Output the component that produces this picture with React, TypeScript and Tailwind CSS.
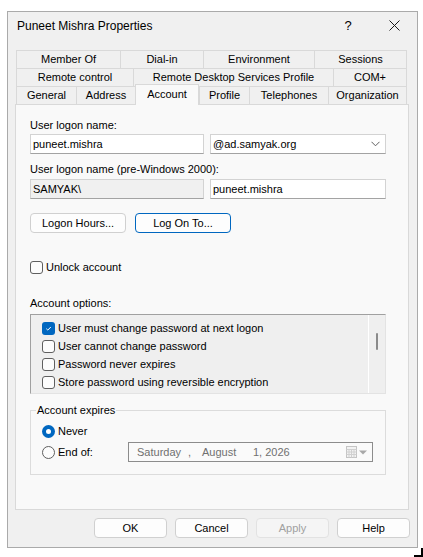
import React from "react";

type Tab = { label: string; width: string; active?: boolean };

const tabRows: Tab[][] = [
  [
    { label: "Member Of", width: "w-[104px]" },
    { label: "Dial-in", width: "w-[83px]" },
    { label: "Environment", width: "w-[111px]" },
    { label: "Sessions", width: "w-[93px]" },
  ],
  [
    { label: "Remote control", width: "w-[117px]" },
    { label: "Remote Desktop Services Profile", width: "w-[200px]" },
    { label: "COM+", width: "w-[74px]" },
  ],
  [
    { label: "General", width: "w-[60px]" },
    { label: "Address", width: "w-[59px]" },
    { label: "Account", width: "w-[64px]", active: true },
    { label: "Profile", width: "w-[50px]" },
    { label: "Telephones", width: "w-[79px]" },
    { label: "Organization", width: "w-[79px]" },
  ],
];

const accountOptions = [
  { label: "User must change password at next logon", checked: true },
  { label: "User cannot change password", checked: false },
  { label: "Password never expires", checked: false },
  { label: "Store password using reversible encryption", checked: false },
];

const CheckBox = ({ checked = false }: { checked?: boolean }) =>
  checked ? (
    <span className="flex h-[13px] w-[13px] shrink-0 items-center justify-center rounded-[3px] bg-[#0067c0]">
      <svg width="9" height="9" viewBox="0 0 9 9">
        <path d="M2.3 4.7 3.8 6.1 6.8 3" fill="none" stroke="#fff" strokeWidth="1" />
      </svg>
    </span>
  ) : (
    <span className="h-[13px] w-[13px] shrink-0 rounded-[3px] border border-[#5f5f5f] bg-[#fcfcfc]" />
  );

const Radio = ({ checked = false }: { checked?: boolean }) =>
  checked ? (
    <span className="flex h-[13px] w-[13px] shrink-0 items-center justify-center rounded-full bg-[#0067c0]">
      <span className="h-[5px] w-[5px] rounded-full bg-white" />
    </span>
  ) : (
    <span className="h-[13px] w-[13px] shrink-0 rounded-full border border-[#5f5f5f] bg-[#fcfcfc]" />
  );

const Button = ({
  label,
  width,
  focused = false,
  disabled = false,
}: {
  label: string;
  width: string;
  focused?: boolean;
  disabled?: boolean;
}) => (
  <div
    className={`flex h-[20px] items-center justify-center rounded-[4px] border ${width} ${
      focused
        ? "border-[#0067c0] bg-[#fdfdfd] text-black"
        : disabled
          ? "border-[#e2e2e2] bg-[#f5f5f5] text-[#a0a0a0]"
          : "border-[#d0d0d0] bg-[#fdfdfd] text-black"
    }`}
  >
    {label}
  </div>
);

const TextField = ({
  value,
  width,
  readOnly = false,
  children,
}: {
  value: string;
  width: string;
  readOnly?: boolean;
  children?: React.ReactNode;
}) => (
  <div
    className={`flex h-[20px] items-center border border-[#d3d3d3] border-b-[#a3a3a3] pl-[2px] pr-[4px] ${width} ${
      readOnly ? "bg-[#f0f0f0]" : "bg-white"
    }`}
  >
    <span className="flex-1">{value}</span>
    {children}
  </div>
);

const TabStrip = () => (
  <div className="ml-[8px] flex flex-col">
    {tabRows.map((row, r) => (
      <div key={r} className="flex h-[18px] items-start">
        {row.map((tab, i) =>
          tab.active ? (
            <div
              key={tab.label}
              className={`relative z-10 -mt-[2px] flex h-[21px] items-center justify-center border-x border-t border-[#d9d9d9] bg-[#f9f9f9] pb-[1px] ${tab.width}`}
            >
              {tab.label}
            </div>
          ) : (
            <div
              key={tab.label}
              className={`flex h-[18px] items-center justify-center border-l border-t border-[#d9d9d9] ${
                i === row.length - 1 ? "border-r" : ""
              } ${tab.width}`}
            >
              {tab.label}
            </div>
          ),
        )}
      </div>
    ))}
  </div>
);

const AccountPanel = () => (
  <div className="ml-[7px] h-[406px] w-[394px] border border-[#d9d9d9] bg-[#f9f9f9] pl-[14px] pt-[13px]">
    <div className="flex w-[356px] flex-col">
      <div className="h-[15px] leading-[15px]">User logon name:</div>
      <div className="mt-[1px] flex gap-[6px]">
        <TextField value="puneet.mishra" width="w-[174px]" />
        <TextField value="@ad.samyak.org" width="w-[176px]">
          <svg width="9" height="6" viewBox="0 0 9 6" className="mr-[1px]">
            <path d="M0.5 0.8 4.5 4.8 8.5 0.8" fill="none" stroke="#606060" strokeWidth="1" />
          </svg>
        </TextField>
      </div>

      <div className="mt-[8px] h-[15px] leading-[15px]">User logon name (pre-Windows 2000):</div>
      <div className="mt-[2px] flex gap-[6px]">
        <TextField value="SAMYAK\" width="w-[174px]" readOnly />
        <TextField value="puneet.mishra" width="w-[176px]" />
      </div>

      <div className="mt-[14px] flex gap-[9px]">
        <Button label="Logon Hours..." width="w-[96px]" />
        <Button label="Log On To..." width="w-[96px]" focused />
      </div>

      <div className="mt-[27px] flex h-[15px] items-center gap-[3px]">
        <CheckBox />
        <span>Unlock account</span>
      </div>

      <div className="mt-[21px] h-[15px] leading-[15px]">Account options:</div>
      <div className="mt-[3px] flex h-[80px] border border-[#a0a0a0] border-b-[#e3e3e3] border-r-[#e3e3e3] bg-[#efefef]">
        <div className="flex flex-1 flex-col pl-[11px] pt-[4px]">
          {accountOptions.map((opt) => (
            <div key={opt.label} className="flex h-[18px] items-center gap-[3px]">
              <CheckBox checked={opt.checked} />
              <span>{opt.label}</span>
            </div>
          ))}
        </div>
        <div className="flex w-[17px] justify-center border-l border-white pt-[18px]">
          <div className="h-[17px] w-[2px] rounded-full bg-[#8a8a8a]" />
        </div>
      </div>

      <div className="relative mt-[16px] h-[65px] border border-[#dcdcdc] pl-[11px] pt-[13px]">
        <span className="absolute -top-[8px] left-[5px] bg-[#f9f9f9] px-[1px] leading-[15px]">
          Account expires
        </span>
        <div className="flex h-[15px] items-center gap-[3px]">
          <Radio checked />
          <span>Never</span>
        </div>
        <div className="mt-[3px] flex h-[20px] items-center">
          <Radio />
          <span className="ml-[3px] w-[70px]">End of:</span>
          <div className="flex h-[20px] w-[245px] items-center border border-[#8c8c8c] bg-[#fafafa] pl-[8px] pr-[5px] text-[#707070]">
            <span className="w-[51px]">Saturday</span>
            <span className="w-[14px]">,</span>
            <span className="w-[51px]">August</span>
            <span>1, 2026</span>
            <svg width="11" height="12" viewBox="0 0 11 12" className="ml-auto">
              <rect x="0.5" y="0.5" width="10" height="11" fill="#f2f2f2" stroke="#c4c4c4" />
              <path d="M0.5 3.5h10M0.5 6h10M0.5 8.5h10M3 3.5v8M5.5 3.5v8M8 3.5v8" stroke="#d0d0d0" strokeWidth="1" />
            </svg>
            <svg width="8" height="5" viewBox="0 0 8 5" className="ml-[2px]">
              <path d="M0 0.5h8L4 4.5z" fill="#a8a8a8" />
            </svg>
          </div>
        </div>
      </div>
    </div>
  </div>
);

export default function App() {
  return (
    <div className="relative h-[557px] w-[423px] bg-white pl-[7px] pt-[11px] font-['Liberation_Sans',Arial,sans-serif] text-[11px] text-black">
      <div className="flex h-[537px] w-[411px] flex-col border border-[#aaaaaa] bg-[#f0f0f0]">
        <div className="flex h-[27px] items-center pl-[9px]">
          <span className="text-[12px]">Puneet Mishra Properties</span>
          <span className="ml-auto flex h-[27px] w-[46px] items-center justify-center text-[13px]">?</span>
          <span className="flex h-[27px] w-[46px] items-center justify-center">
            <svg width="11" height="11" viewBox="0 0 11 11">
              <path d="M0.5 0.5 10.5 10.5M10.5 0.5 0.5 10.5" stroke="#1a1a1a" strokeWidth="1" />
            </svg>
          </span>
        </div>

        <div className="mt-[11px]">
          <TabStrip />
          <AccountPanel />
        </div>

        <div className="mt-[8px] flex justify-end gap-[8px] pr-[7px]">
          <Button label="OK" width="w-[73px]" />
          <Button label="Cancel" width="w-[73px]" />
          <Button label="Apply" width="w-[73px]" disabled />
          <Button label="Help" width="w-[73px]" />
        </div>
      </div>

      {/* sizing grip mark at the lower right corner */}
      <div className="absolute left-[414px] top-[548px] h-[9px] w-[9px] border-b-2 border-r-2 border-black" />
    </div>
  );
}
